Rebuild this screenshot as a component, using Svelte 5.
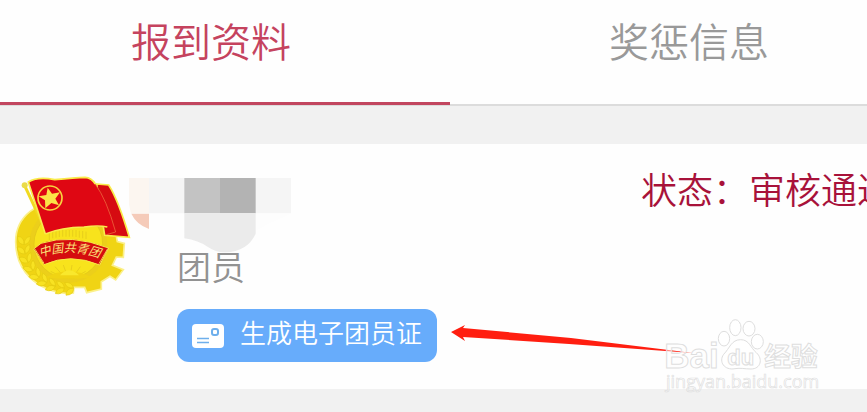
<script>
    const tabs = ['报到资料', '奖惩信息']
    const scallops = Array.from({ length: 9 }, (_, i) => i)
    let active = $state(0)
</script>

<main class="page">
    <div class="tabs" role="tablist">
        {#each tabs as tab, i}
            <button class="tab" class:active={active === i} role="tab" aria-selected={active === i} onclick={() => active = i}>{tab}</button>
        {/each}
    </div>

    <section class="card">
        <svg class="emblem" viewBox="0 0 450 420" aria-label="团徽">
            <path d="M208 108 C110 100 46 158 47 232 C48 315 106 378 205 386 L220 384 L222 367 L254 367 L260 383 L304 372 L304 350 L330 334 L347 345 L370 314 L337 301 L349 276 L370 277 L373 235 L352 230 C345 160 285 110 208 108Z" fill="#f0d414" stroke="#fbf08a" stroke-width="5"/>
            <circle cx="205" cy="237" r="117" fill="#eccf1a"/>
            <circle cx="205" cy="237" r="103" fill="#f8e31c" stroke="#e0c41a" stroke-width="2"/>
            {#each scallops as n}
                <g transform="rotate({-n * 12} 205 237)" fill="#f8e222" stroke="#e3ca12" stroke-width="2">
                    <path d="M53 214 Q74 216 72 239 Q51 237 53 214Z"/>
                    <path d="M91 214 Q71 218 73 239 Q92 234 91 214Z"/>
                </g>
            {/each}
            <g stroke="#e0c41b" stroke-width="2">
                <path d="M148 195V225M158 195V220M168 195V218M178 195V216M188 195V215M198 195V215M208 195V215M218 195V215M228 195V216M238 197V218M248 198V220M258 200V222"/>
                <path d="M180 333L152 319M187 329L165 305M199 325L190 300M212 325L216 300M225 328L241 305M234 332L257 319"/>
            </g>
            <path d="M138 337 Q205 300 275 337 Q205 346 138 337Z" fill="#f0d414"/>
            <path d="M180 331 Q207 301 237 331Z" fill="#f9e82c"/>
            <path d="M123 235 Q212 205 326 249 L299 300 Q211 263 132 299 L101 252Z" fill="#d50d0f" stroke="#f7e948" stroke-width="3"/>
            <path d="M104 251 L132 295 M323 251 L297 296" stroke="#f3c94a" stroke-width="3"/>
            <path id="ribbon" d="M121 277 Q212 243 312 284" fill="none"/>
            <text class="ribbon"><textPath href="#ribbon">中国共青团</textPath></text>
            <path d="M75 64 L142 207" stroke="#f1da20" stroke-width="9"/>
            <path d="M290 57 L326 60 Q355 105 388 217 L314 211Z" fill="#d60b11" stroke="#f9ec4a" stroke-width="5"/>
            <path d="M85 51 Q113 34 164 44 Q225 38 255 37 Q275 38 286 57 Q319 101 347 201 Q318 178 252 186 Q184 187 136 207Z" fill="#df0713"/>
            <path d="M286 58 Q319 101 347 201 L319 209" fill="none" stroke="#f07a45" stroke-width="2"/>
            <path d="M136 207 L85 51 Q113 34 164 44 Q225 38 255 37 Q275 38 286 57 M136 207 Q184 187 252 186 Q296 180 322 186" fill="none" stroke="#f9ec4a" stroke-width="5"/>
            <circle cx="74" cy="61" r="9" fill="#eadb48"/>
            <circle cx="150" cy="99" r="36" fill="none" stroke="#f7d33f" stroke-width="5"/>
            <path d="M143 68 L156 86 L180 82 L166 101 L177 121 L154 114 L136 130 L135 106 L116 94 L139 90Z" fill="#fce447"/>
        </svg>

        <div class="body">
            <div class="head">
                <svg class="name" viewBox="27 39 486 225" aria-hidden="true">
                    <path d="M27 39H87V145H33Q18 90 27 39Z" fill="#fcf6f0"/>
                    <path d="M87 39H513V145H87Z" fill="#f5f5f5"/>
                    <path d="M407 145H513L407 196Z" fill="#fdfdfd"/>
                    <path d="M193 39H300V145H193Z" fill="#c3c3c3"/>
                    <path d="M300 39H407V145H300Z" fill="#b3b3b3"/>
                    <path d="M34 146H87V192Q49 178 34 146Z" fill="#f5cbb9"/>
                    <path d="M193 145H407V206Q382 260 316 262Q288 263 264 246Q235 226 193 220Z" fill="#ebebeb"/>
                </svg>
                <span class="status">状态：审核通过</span>
            </div>
            <div class="role">团员</div>
            <div class="action">
                <button class="generate">
                    <svg class="card-icon" viewBox="0 0 32 24" aria-hidden="true">
                        <rect width="32" height="24" rx="4" fill="#fff"/>
                        <rect x="20" y="5" width="6" height="6" rx="2" fill="none" stroke="#6eafec" stroke-width="2"/>
                        <path d="M5 14.5H17M5 18.5H17" stroke="#6eafec" stroke-width="1.6"/>
                    </svg>
                    <span>生成电子团员证</span>
                </button>
                <svg class="arrow" viewBox="0 0 242 32" aria-hidden="true">
                    <path d="M0 7 L14 0 L12 3 L120 13 L242 28 L118 19 L12 12 L14 16Z" fill="#ff1e10"/>
                </svg>
            </div>
        </div>
    </section>

    <svg class="watermark" viewBox="0 0 651 321" aria-hidden="true">
        <g fill="#fff" fill-opacity="0.5" stroke="#dedede" stroke-width="3">
            <text class="logo" x="43" y="189">Bai</text>
            <ellipse cx="222" cy="101" rx="17" ry="22"/>
            <ellipse cx="256" cy="68" rx="17" ry="24"/>
            <ellipse cx="297" cy="71" rx="18" ry="22"/>
            <ellipse cx="322" cy="110" rx="18" ry="22"/>
            <path d="M272 104 C298 104 301 128 319 143 C340 162 332 192 303 192 C284 192 272 188 255 191 C223 197 205 170 221 148 C239 130 244 104 272 104Z"/>
            <text class="du" x="232" y="179">du</text>
            <text class="cn" x="343" y="182">经验</text>
            <text class="site" x="48" y="249">jingyan.baidu.com</text>
        </g>
    </svg>
</main>

<style>
    :global(body) {
        margin: 0;
        background: #f1f1f1;
    }
    .page {
        position: relative;
        min-height: 100vh;
        overflow: hidden;
        font-family: "Noto Sans CJK SC", sans-serif;
    }
    button {
        border: 0;
        padding: 0;
        font-family: inherit;
        cursor: pointer;
    }
    /* the sheet runs past both edges of the window */
    .tabs {
        display: flex;
        margin: 0 -61px 0 -28px;
        background: #fefefe;
        border-bottom: 2px solid #dcdcdc;
    }
    .tab {
        flex: 1;
        padding: 10px 0 32px;
        margin-bottom: -1px;
        border-bottom: 3px solid transparent;
        background: none;
        color: #999;
        font-size: 40px;
        font-weight: 350;
        line-height: 60px;
    }
    .tab.active {
        color: #c5435e;
        border-color: #c2465f;
    }
    .card {
        display: flex;
        margin: 38px -61px 0 0;
        padding: 21px 35px 27px 0;
        background: #fefefe;
    }
    .emblem {
        flex: none;
        width: 150px;
        height: 140px;
    }
    .ribbon {
        fill: #fbe27a;
        font-size: 36px;
        font-style: italic;
    }
    .body {
        flex: 1;
        padding: 13px 0 0 27px;
    }
    .head {
        display: flex;
        justify-content: space-between;
        height: 66px;
    }
    .name {
        flex: none;
        width: 162px;
        height: 75px;
        margin-left: -48px;
    }
    .status {
        margin-top: -10px;
        color: #a8123a;
        font-size: 36px;
        font-weight: 350;
        line-height: 40px;
        white-space: nowrap;
    }
    .role {
        color: #929292;
        font-size: 34px;
        font-weight: 350;
        line-height: 44px;
    }
    .action {
        display: flex;
        align-items: flex-start;
        gap: 14px;
        margin-top: 21px;
    }
    .generate {
        display: flex;
        align-items: center;
        gap: 16px;
        padding: 4px 15px 11px 15px;
        border-radius: 12px;
        background: #67acfb;
        color: #fff;
        font-size: 26px;
        font-weight: 350;
        line-height: 38px;
        white-space: nowrap;
    }
    .card-icon {
        width: 32px;
        height: 24px;
        margin-top: 8px;
    }
    .arrow {
        width: 242px;
        height: 32px;
        margin-top: 16px;
    }
    .watermark {
        position: absolute;
        right: 0;
        bottom: 0;
        width: 217px;
        height: 107px;
    }
    .logo, .du {
        font-family: "Liberation Sans", sans-serif;
        font-weight: 700;
    }
    .logo {
        font-size: 105px;
    }
    .du {
        font-size: 66px;
    }
    .cn {
        font-size: 80px;
        font-weight: 700;
    }
    .site {
        font-family: "Open Sans", sans-serif;
        font-size: 54px;
        stroke-width: 2;
    }
</style>
